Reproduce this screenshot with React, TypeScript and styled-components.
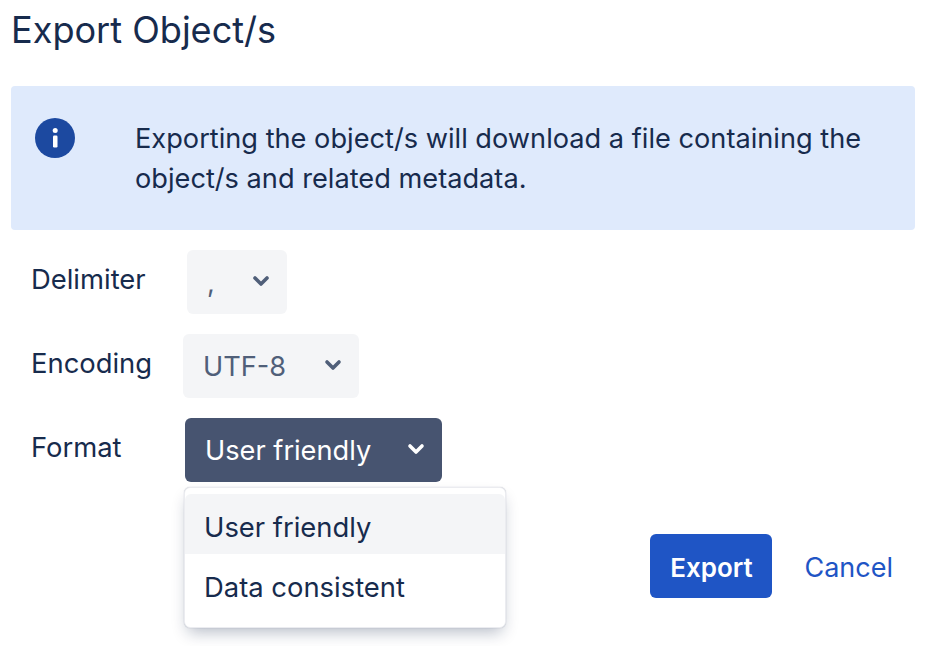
import styled, { createGlobalStyle } from 'styled-components';

const GlobalStyle = createGlobalStyle`
    html, body {
        margin: 0;
        background: #ffffff;
        overflow: hidden;
    }
    body {
        font-family: Inter, "Liberation Sans", sans-serif;
        color: #172b4d;
    }
`;

const Page = styled.div`
    width: 942px;
    height: 646px;
    box-sizing: border-box;
    padding-left: 11px;
    padding-right: 27px;
`;

const Title = styled.h1`
    margin: 0;
    height: 86px;
    padding-top: 8px;
    box-sizing: border-box;
    font-size: 36.1px;
    line-height: 44px;
    font-weight: 400;
    color: #172b4d;
`;

const Banner = styled.div`
    background: #dfeafc;
    border-radius: 4px;
    height: 144px;
    box-sizing: border-box;
    padding: 32px 24px 0;
    display: flex;
    gap: 60px;
`;

const InfoIcon = styled.svg`
    width: 40px;
    height: 40px;
    flex: none;
`;

const BannerText = styled.p`
    margin: 1px 0 0;
    font-size: 27.2px;
    line-height: 40px;
    color: #172b4d;
`;

const Form = styled.div`
    display: flex;
    flex-direction: column;
    gap: 20px;
    margin-top: 20px;
    padding-left: 20px;
`;

const Row = styled.div<{ $gap: number }>`
    display: flex;
    align-items: flex-start;
    height: 64px;

    label {
        width: ${(p) => p.$gap}px;
        font-size: 27.4px;
        line-height: 59px;
        color: #172b4d;
    }
`;

const SelectButton = styled.button<{ $width: number; $active?: boolean }>`
    width: ${(p) => p.$width}px;
    height: 64px;
    border: 0;
    border-radius: 6px;
    padding: 0 17px 0 20px;
    display: flex;
    align-items: center;
    justify-content: space-between;
    font: inherit;
    font-size: 27.2px;
    background: ${(p) => (p.$active ? '#475470' : '#f4f5f7')};
    color: ${(p) => (p.$active ? '#ffffff' : '#505f79')};
`;

const Chevron = styled.svg`
    width: 18px;
    height: 12px;
    margin-top: -2px;
    flex: none;
`;

const Footer = styled.div`
    position: relative;
    display: flex;
    justify-content: flex-end;
    align-items: center;
    gap: 32px;
    margin-top: 52px;
    padding-right: 22px;
`;

const ExportButton = styled.button`
    width: 122px;
    height: 64px;
    border: 0;
    border-radius: 6px;
    background: #1f55c5;
    color: #ffffff;
    font: inherit;
    font-size: 26px;
    font-weight: 600;
    padding-top: 4px;
`;

const CancelLink = styled.a`
    font-size: 27px;
    color: #1f55c5;
    padding-top: 2px;
`;

const Menu = styled.div`
    position: absolute;
    left: 173px;
    top: -47px;
    width: 322px;
    height: 141px;
    box-sizing: border-box;
    background: #ffffff;
    border: 1px solid #ebecf0;
    border-radius: 6px;
    padding-top: 6px;
    box-shadow: 0 8px 16px -4px rgba(9, 30, 66, 0.3), 0 0 1px rgba(9, 30, 66, 0.31);
`;

const MenuItem = styled.div<{ $selected?: boolean }>`
    height: 60px;
    box-sizing: border-box;
    padding: 6px 0 0 19px;
    display: flex;
    align-items: center;
    font-size: 27.4px;
    color: #172b4d;
    background: ${(p) => (p.$selected ? '#f4f5f7' : 'transparent')};
    border-radius: ${(p) => (p.$selected ? '6px 6px 0 0' : '0')};
`;

const DownIcon = ({ color }: { color: string }) => (
    <Chevron viewBox="0 0 18 12" fill="none">
        <path d="M3 3l6 6 6-6" stroke={color} strokeWidth="3.6" strokeLinecap="round" strokeLinejoin="round" />
    </Chevron>
);

const App = () => {
    return (
        <Page>
            <GlobalStyle />
            <Title>Export Object/s</Title>
            <Banner>
                <InfoIcon viewBox="0 0 40 40">
                    <circle cx="20" cy="20" r="20" fill="#1c49a0" />
                    <rect x="18" y="17.5" width="4.5" height="12" rx="1.2" fill="#ffffff" />
                    <circle cx="20.2" cy="12.5" r="2.5" fill="#ffffff" />
                </InfoIcon>
                <BannerText>
                    Exporting the object/s will download a file containing the
                    <br />
                    object/s and related metadata.
                </BannerText>
            </Banner>
            <Form>
                <Row $gap={156}>
                    <label>Delimiter</label>
                    <SelectButton $width={100}>
                        ,
                        <DownIcon color="#505f79" />
                    </SelectButton>
                </Row>
                <Row $gap={152}>
                    <label>Encoding</label>
                    <SelectButton $width={176}>
                        UTF-8
                        <DownIcon color="#505f79" />
                    </SelectButton>
                </Row>
                <Row $gap={154}>
                    <label>Format</label>
                    <SelectButton $width={257} $active>
                        User friendly
                        <DownIcon color="#ffffff" />
                    </SelectButton>
                </Row>
            </Form>
            <Footer>
                <Menu>
                    <MenuItem $selected>User friendly</MenuItem>
                    <MenuItem>Data consistent</MenuItem>
                </Menu>
                <ExportButton>Export</ExportButton>
                <CancelLink>Cancel</CancelLink>
            </Footer>
        </Page>
    );
};

export default App;
